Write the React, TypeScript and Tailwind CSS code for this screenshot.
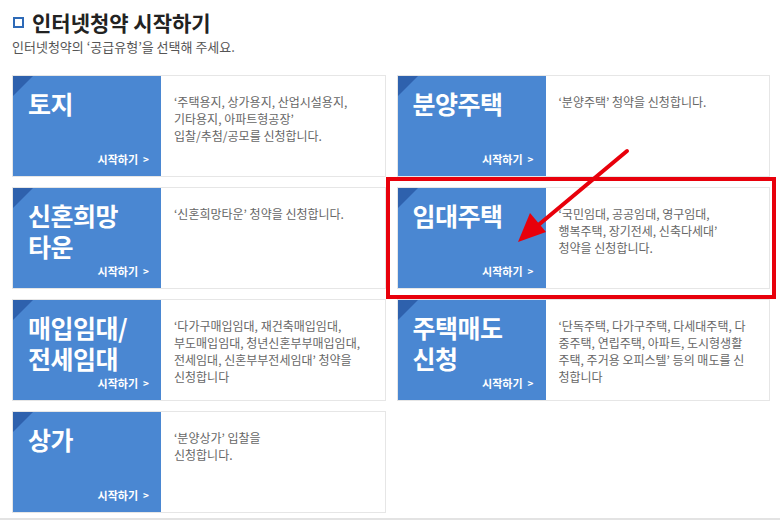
import React from 'react';

interface Item {
    title: string[];
    desc: string[];
}

const items: Item[] = [
    { title: ['토지'], desc: ["‘주택용지, 상가용지, 산업시설용지,", "기타용지, 아파트형공장’", '입찰/추첨/공모를 신청합니다.'] },
    { title: ['분양주택'], desc: ["‘분양주택’ 청약을 신청합니다."] },
    { title: ['신혼희망', '타운'], desc: ["‘신혼희망타운’ 청약을 신청합니다."] },
    { title: ['임대주택'], desc: ["‘국민임대, 공공임대, 영구임대,", "행복주택, 장기전세, 신축다세대’", '청약을 신청합니다.'] },
    { title: ['매입임대/', '전세임대'], desc: ["‘다가구매입임대, 재건축매입임대,", '부도매입임대, 청년신혼부부매입임대,', "전세임대, 신혼부부전세임대’ 청약을", '신청합니다'] },
    { title: ['주택매도', '신청'], desc: ["‘단독주택, 다가구주택, 다세대주택, 다", '중주택, 연립주택, 아파트, 도시형생활', "주택, 주거용 오피스텔’ 등의 매도를 신", '청합니다'] },
    { title: ['상가'], desc: ["‘분양상가’ 입찰을", '신청합니다.'] },
];

const Card: React.FC<{ item: Item }> = ({ item }) => (
    <div className="flex h-[102px] border border-[#e6e6e6] bg-white">
        <div className="relative w-[148px] shrink-0 bg-[#4a87d2] text-white overflow-hidden">
            <div className="absolute left-0 top-0 w-0 h-0 border-t-[20px] border-r-[20px] border-t-[#2e61ad] border-r-transparent" />
            <div className="pl-[15px] pt-[12px] text-[25px] font-bold leading-[31px] tracking-[-0.5px]">
                {item.title.map((t) => (
                    <div key={t}>{t}</div>
                ))}
            </div>
            <div className="absolute right-[12px] bottom-[10px] text-[11px] leading-[14px] font-bold flex items-center gap-[5px]">
                시작하기 <span className="text-[10px]">&gt;</span>
            </div>
        </div>
        <div className="pl-[13px] pt-[17px] pr-1 text-[12px] leading-[17px] text-[#666]">
            {item.desc.map((d) => (
                <div key={d} className="whitespace-nowrap">{d}</div>
            ))}
        </div>
    </div>
);

export default function App() {
    return (
        <div
            className="relative w-[780px] h-[522px] bg-white overflow-hidden"
            style={{ fontFamily: '"Noto Sans CJK KR", "Noto Sans", sans-serif' }}
        >
            <div className="px-[12px] pt-[8px]">
                <div className="flex items-center gap-[8px]">
                    <div className="w-[11px] h-[11px] border-[2px] border-[#2e6ab7] ml-[1px]" />
                    <div className="text-[21px] font-bold text-[#222] leading-[28px]">인터넷청약 시작하기</div>
                </div>
                <div className="mt-[2px] text-[13px] text-[#555] leading-[17px]">인터넷청약의 ‘공급유형’을 선택해 주세요.</div>
            </div>
            <div className="mt-[20px] ml-[12px] w-[758px] grid grid-cols-2 gap-x-[11px] gap-y-[10px]">
                {items.map((it) => (
                    <Card key={it.title.join('')} item={it} />
                ))}
            </div>
            <div className="absolute left-0 right-0 top-[518px] h-[2px] bg-[#e3e3e3]" />

            {/* red highlight box */}
            <div className="absolute left-[386px] top-[177px] w-[390px] h-[122px] border-[4px] border-[#e8000b]" />
            <svg className="absolute left-0 top-0" width="780" height="522">
                <line x1="627" y1="151" x2="536" y2="227" stroke="#e8000b" strokeWidth="4" strokeLinecap="round" />
                <polygon points="518,242 530,213 546,232" fill="#e8000b" />
            </svg>
        </div>
    );
}
